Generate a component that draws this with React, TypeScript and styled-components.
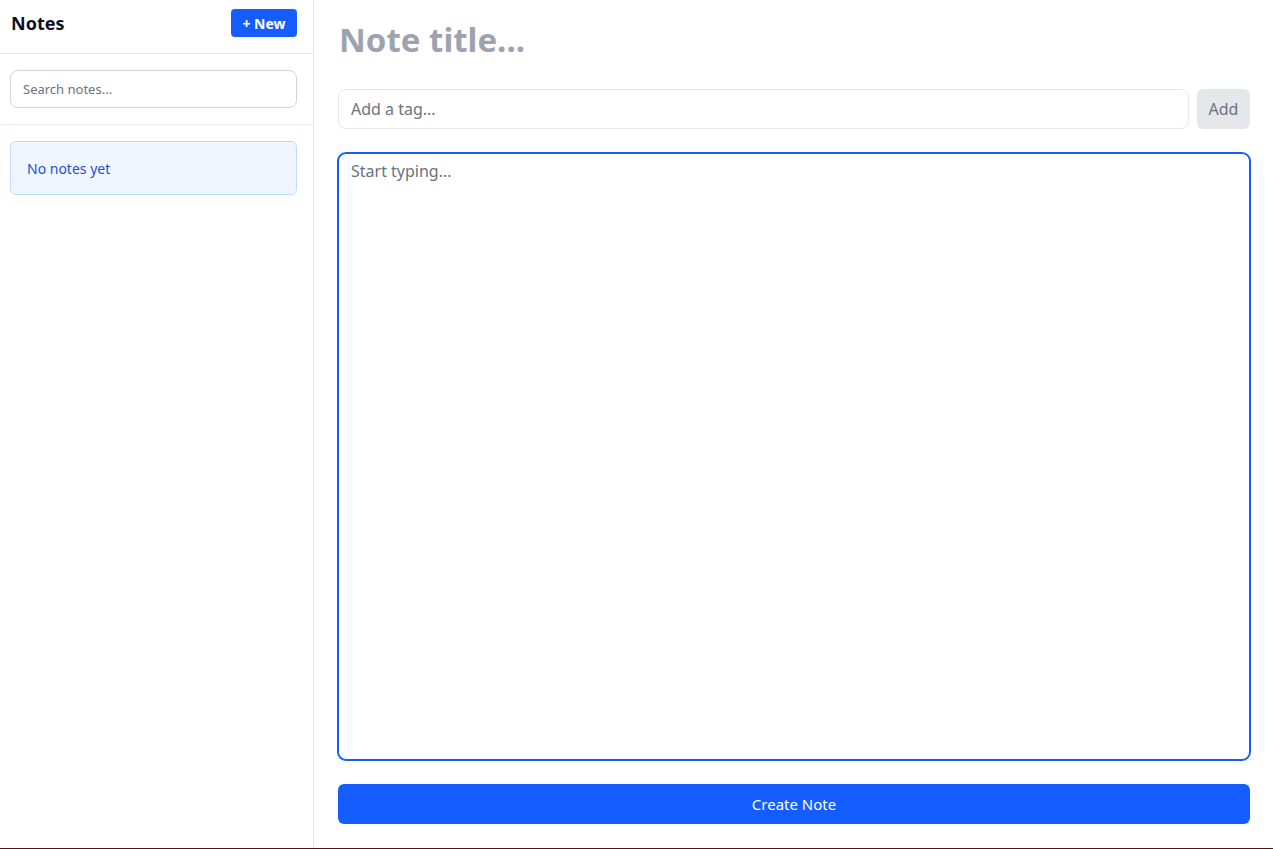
import React, { useState } from "react";
import styled, { createGlobalStyle } from "styled-components";

const Global = createGlobalStyle`
  * { box-sizing: border-box; }
  html, body { margin: 0; padding: 0; background: #ffffff; }
  body {
    font-family: "Segoe UI", "Noto Sans", "Open Sans", sans-serif;
    color: #111827;
  }
`;

const Layout = styled.div`
  display: flex;
  height: 100vh;
  border-bottom: 1px solid #5a0d0d;
`;

const Sidebar = styled.aside`
  width: 314px;
  flex-shrink: 0;
  border-right: 1px solid #e5e7eb;
  display: flex;
  flex-direction: column;
`;

const SidebarHeader = styled.div`
  display: flex;
  align-items: center;
  justify-content: space-between;
  padding: 9px 16px 16px 11px;
  border-bottom: 1px solid #e5e7eb;
`;

const Brand = styled.h1`
  margin: 0;
  font-size: 18px;
  line-height: 28px;
  font-weight: 700;
  color: #0b1020;
`;

const NewButton = styled.button`
  height: 28px;
  width: 66px;
  border: none;
  border-radius: 4px;
  background: #165dff;
  color: #ffffff;
  font-family: inherit;
  font-size: 14px;
  font-weight: 700;
  cursor: pointer;
`;

const Section = styled.div<{ $divided?: boolean }>`
  padding: 16px 16px 16px 10px;
  border-bottom: ${(p) => (p.$divided ? "1px solid #e5e7eb" : "none")};
`;

const SearchInput = styled.input`
  width: 100%;
  height: 38px;
  border: 1px solid #d1d5db;
  border-radius: 8px;
  padding: 0 12px;
  font-family: inherit;
  font-size: 13px;
  color: #111827;
  outline: none;
  &::placeholder { color: #6b7280; }
`;

const EmptyCard = styled.div`
  height: 54px;
  display: flex;
  align-items: center;
  padding: 0 16px;
  border: 1px solid #bfdbfe;
  border-radius: 6px;
  background: #eff6ff;
  color: #1d4ed8;
  font-size: 14px;
`;

const Main = styled.main`
  flex: 1;
  display: flex;
  flex-direction: column;
  padding: 24px 23px 24px 24px;
  min-width: 0;
`;

const TitleInput = styled.input`
  height: 41px;
  border: none;
  outline: none;
  padding: 0 0 10px 0;
  margin: 0 0 24px 1px;
  font-family: inherit;
  font-size: 33px;
  font-weight: 700;
  color: #111827;
  background: transparent;
  &::placeholder { color: #9ca3af; }
`;

const TagRow = styled.div`
  display: flex;
  gap: 8px;
  margin-bottom: 24px;
`;

const TagInput = styled.input`
  flex: 1;
  height: 40px;
  border: 1px solid #e5e7eb;
  border-radius: 8px;
  padding: 0 12px;
  font-family: inherit;
  font-size: 16px;
  outline: none;
  &::placeholder { color: #6b7280; }
`;

const AddButton = styled.button`
  width: 53px;
  height: 40px;
  border: none;
  border-radius: 6px;
  background: #e5e7eb;
  color: #6b7280;
  font-family: inherit;
  font-size: 16px;
`;

const Editor = styled.textarea`
  flex: 1;
  resize: none;
  border: 1px solid #165dff;
  box-shadow: 0 0 0 1px #165dff;
  border-radius: 8px;
  padding: 5px 12px;
  font-family: inherit;
  font-size: 16px;
  line-height: 1.5;
  color: #111827;
  outline: none;
  &::placeholder { color: #6b7280; }
`;

const CreateButton = styled.button`
  margin-top: 24px;
  height: 40px;
  border: none;
  border-radius: 6px;
  background: #165dff;
  color: #ffffff;
  font-family: inherit;
  font-size: 15px;
  cursor: pointer;
`;

export default function App() {
  const [title, setTitle] = useState("");
  const [tag, setTag] = useState("");
  const [body, setBody] = useState("");
  const [search, setSearch] = useState("");

  return (
    <>
      <Global />
      <Layout>
        <Sidebar>
          <SidebarHeader>
            <Brand>Notes</Brand>
            <NewButton>+ New</NewButton>
          </SidebarHeader>
          <Section $divided>
            <SearchInput
              placeholder="Search notes..."
              value={search}
              onChange={(e) => setSearch(e.target.value)}
            />
          </Section>
          <Section>
            <EmptyCard>No notes yet</EmptyCard>
          </Section>
        </Sidebar>
        <Main>
          <TitleInput
            placeholder="Note title..."
            value={title}
            onChange={(e) => setTitle(e.target.value)}
          />
          <TagRow>
            <TagInput
              placeholder="Add a tag..."
              value={tag}
              onChange={(e) => setTag(e.target.value)}
            />
            <AddButton>Add</AddButton>
          </TagRow>
          <Editor
            autoFocus
            placeholder="Start typing..."
            value={body}
            onChange={(e) => setBody(e.target.value)}
          />
          <CreateButton>Create Note</CreateButton>
        </Main>
      </Layout>
    </>
  );
}
